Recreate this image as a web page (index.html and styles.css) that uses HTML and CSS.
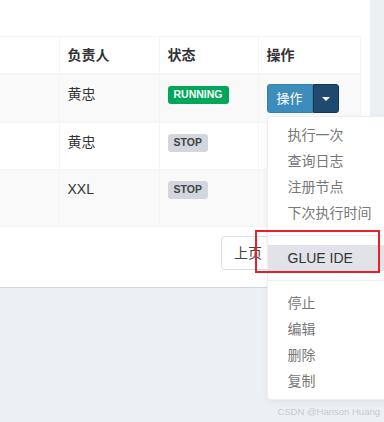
FILE: index.html
```html
<!DOCTYPE html>
<html lang="zh-CN">
<head>
    <meta charset="UTF-8">
    <meta name="viewport" content="width=device-width, initial-scale=1.0">
    <title>任务管理</title>
    <link rel="stylesheet" href="styles.css">
</head>
<body>
    <div class="box">
        <table class="job-table">
            <colgroup>
                <col class="col-desc">
                <col class="col-author">
                <col class="col-status">
                <col class="col-op">
            </colgroup>
            <thead>
                <tr>
                    <th class="cell-cut"></th>
                    <th>负责人</th>
                    <th>状态</th>
                    <th>操作</th>
                </tr>
            </thead>
            <tbody>
                <tr class="row-a">
                    <td class="cell-cut"></td>
                    <td>黄忠</td>
                    <td><span class="label label-success">RUNNING</span></td>
                    <td>
                        <div class="btn-group">
                            <button class="btn-op">操作</button>
                            <button class="btn-caret"><span class="caret"></span></button>
                            <ul class="dropdown-menu">
                                <li><a href="#">执行一次</a></li>
                                <li><a href="#">查询日志</a></li>
                                <li><a href="#">注册节点</a></li>
                                <li><a href="#">下次执行时间</a></li>
                                <li class="divider"></li>
                                <li class="active"><a href="#">GLUE IDE</a></li>
                                <li class="divider"></li>
                                <li><a href="#">停止</a></li>
                                <li><a href="#">编辑</a></li>
                                <li><a href="#">删除</a></li>
                                <li><a href="#">复制</a></li>
                            </ul>
                        </div>
                    </td>
                </tr>
                <tr class="row-b">
                    <td class="cell-cut"></td>
                    <td>黄忠</td>
                    <td><span class="label label-default">STOP</span></td>
                    <td></td>
                </tr>
                <tr class="row-c">
                    <td class="cell-cut"></td>
                    <td>XXL</td>
                    <td><span class="label label-default">STOP</span></td>
                    <td></td>
                </tr>
            </tbody>
        </table>
        <div class="pager">
            <a href="#" class="page-prev">上页</a>
        </div>
    </div>

    <div class="mark-box"></div>
    <div class="watermark">CSDN @Hanson Huang</div>
</body>
</html>
```

FILE: styles.css
```css
body {
    margin: 0;
    padding: 0;
    height: 422px;
    overflow: hidden;
    position: relative;
    background-color: #ecf0f5;
    font-family: "Liberation Sans", "Noto Sans CJK SC", sans-serif;
    font-size: 14px;
    color: #333;
}
.box {
    width: 370px;
    padding: 36px 0 17px 0;
    background-color: #fff;
    border-bottom: 1px solid #d2d6de;
}
.job-table {
    width: 360px;
    table-layout: fixed;
    border-collapse: collapse;
}
.col-desc {
    width: 59px;
}
.col-author {
    width: 100px;
}
.col-status {
    width: 99px;
}
.col-op {
    width: 102px;
}
.job-table th,
.job-table td {
    border: 1px solid #f4f4f4;
    text-align: left;
    vertical-align: top;
    line-height: 20px;
}
.job-table th {
    padding: 8px;
    font-weight: bold;
    border-bottom-width: 2px;
}
.job-table td {
    padding: 9px 8px;
}
.job-table .cell-cut {
    border-left: none;
}
.row-a,
.row-c {
    background-color: #f9f9f9;
}
.row-b {
    height: 47px;
}
.row-c {
    height: 57px;
}
.label {
    display: inline-block;
    padding: 3px 6px 4px 6px;
    font-size: 10.5px;
    font-weight: bold;
    line-height: 11px;
    border-radius: 3px;
    vertical-align: 1px;
}
.label-success {
    background-color: #00a65a;
    color: #fff;
}
.label-default {
    background-color: #d2d6de;
    color: #444;
}
.btn-group {
    position: relative;
    display: inline-flex;
}
.btn-group button {
    margin: 0;
    cursor: pointer;
    font-family: inherit;
}
.btn-op {
    padding: 5px 9px;
    font-size: 13px;
    line-height: 17px;
    color: #fff;
    background-color: #3c8dbc;
    border: 1px solid #367fa9;
    border-radius: 3px 0 0 3px;
}
.btn-caret {
    display: flex;
    align-items: center;
    justify-content: center;
    width: 26px;
    padding: 0;
    background-color: #1e4a70;
    border: 1px solid #163756;
    border-radius: 0 3px 3px 0;
}
.caret {
    width: 0;
    height: 0;
    border-top: 4px solid #fff;
    border-left: 4px solid transparent;
    border-right: 4px solid transparent;
}
.dropdown-menu {
    position: absolute;
    top: 100%;
    left: 0;
    z-index: 10;
    min-width: 160px;
    margin: 3px 0 0 0;
    padding: 5px 0;
    list-style: none;
    background-color: #fff;
    border: 1px solid #eceef1;
    border-radius: 4px;
    box-shadow: 0 2px 6px rgba(0, 0, 0, 0.06);
}
.dropdown-menu li a {
    display: block;
    padding: 3px 20px;
    line-height: 20px;
    font-size: 14px;
    color: #777;
    text-decoration: none;
    white-space: nowrap;
}
.dropdown-menu .divider {
    height: 1px;
    margin: 9px 0;
    background-color: #eceef1;
}
.dropdown-menu .active a {
    background-color: #e1e3e9;
    color: #333;
}
.pager {
    display: flex;
    justify-content: flex-end;
    margin-top: 9px;
    padding-right: 95px;
}
.pager a {
    padding: 6px 12px;
    line-height: 20px;
    color: #444;
    text-decoration: none;
    border: 1px solid #ddd;
    border-radius: 4px 0 0 4px;
}
.mark-box {
    position: absolute;
    left: 255px;
    top: 230px;
    z-index: 20;
    width: 125px;
    height: 43px;
    box-sizing: border-box;
    border: 2px solid #e8202a;
}
.watermark {
    position: absolute;
    right: 4px;
    bottom: 5px;
    font-size: 9.5px;
    color: #c5c9d0;
}
```
